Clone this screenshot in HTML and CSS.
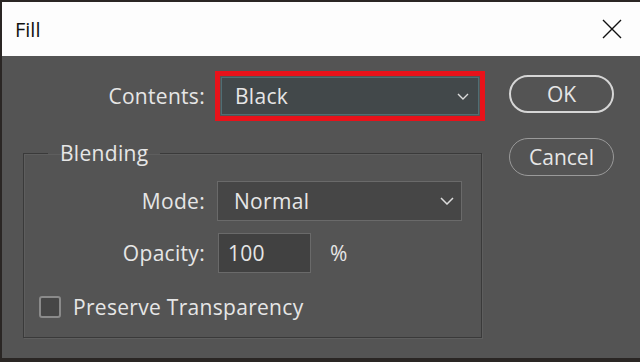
FILE: index.html
```html
<!DOCTYPE html>
<html lang="en">
<head>
    <meta charset="UTF-8">
    <meta name="viewport" content="width=device-width, initial-scale=1.0">
    <title>Fill</title>
    <link rel="stylesheet" href="styles.css">
</head>
<body>

<div class="window">
    <div class="title-bar">
        <span class="title">Fill</span>
        <svg class="close" width="20" height="20" viewBox="0 0 20 20">
            <path d="M1 1 L19 19 M19 1 L1 19" stroke="#111" stroke-width="1.4" fill="none"/>
        </svg>
    </div>

    <div class="dialog-body">
        <form class="form-col">
            <div class="row contents-row">
                <span class="label">Contents:</span>
                <div class="select highlight">
                    <span>Black</span>
                    <svg class="chevron" width="12" height="7" viewBox="0 0 12 7">
                        <path d="M1 1 L6 6 L11 1" stroke="#dcdcdc" stroke-width="1.4" fill="none"/>
                    </svg>
                </div>
            </div>

            <fieldset class="blending">
                <legend>Blending</legend>
                <div class="row mode-row">
                    <span class="label">Mode:</span>
                    <div class="select mode">
                        <span>Normal</span>
                        <svg class="chevron" width="14" height="8" viewBox="0 0 14 8">
                            <path d="M1 1 L7 7 L13 1" stroke="#dcdcdc" stroke-width="1.5" fill="none"/>
                        </svg>
                    </div>
                </div>
                <div class="row opacity-row">
                    <span class="label">Opacity:</span>
                    <div class="text-input">100</div>
                    <span class="unit">%</span>
                </div>
                <label class="check-row">
                    <span class="checkbox"></span>
                    <span>Preserve Transparency</span>
                </label>
            </fieldset>
        </form>

        <div class="buttons">
            <button class="btn ok" type="button">OK</button>
            <button class="btn cancel" type="button">Cancel</button>
        </div>
    </div>
</div>

</body>
</html>
```

FILE: styles.css
```css
html, body {
    margin: 0;
    padding: 0;
}

body {
    width: 640px;
    height: 362px;
    background-color: #2a2624;
    font-family: "Open Sans", "Noto Sans", sans-serif;
    overflow: hidden;
}

.window {
    margin: 2px 0 0 2px;
    height: 356px;
    background-color: #545454;
    color: #e6e6e6;
    font-size: 21px;
    letter-spacing: 0.3px;
}

.title-bar {
    height: 54px;
    background-color: #fdfdfd;
    display: flex;
    align-items: center;
    justify-content: space-between;
    padding: 0 18px 0 13px;
}

.title {
    color: #111;
    font-size: 20px;
    letter-spacing: 0;
}

.dialog-body {
    display: flex;
    align-items: flex-start;
    padding-left: 21px;
}

.form-col {
    width: 460px;
    margin: 0;
}

.row {
    display: flex;
    align-items: center;
}

.label {
    text-align: right;
    box-sizing: border-box;
}

.contents-row {
    margin-top: 21px;
}

.contents-row .label {
    width: 182px;
}

.select {
    display: flex;
    align-items: center;
    justify-content: space-between;
    box-sizing: border-box;
    padding: 0 9px 0 16px;
}

.select.highlight {
    margin-left: 16px;
    width: 258px;
    height: 38px;
    padding-left: 13px;
    background-color: #42484a;
    border: 1px solid #4f6e74;
    outline: 5px solid #e8121a;
    outline-offset: 1px;
}

.blending {
    margin: 26px 0 0 0;
    padding: 0;
    width: 459px;
    height: 197px;
    box-sizing: border-box;
    border: 1px solid #3a3a3a;
    box-shadow: inset 1px 1px 0 #5e5e5e, 1px 1px 0 #5e5e5e;
}

.blending legend {
    margin-left: 24px;
    padding: 0 12px;
    line-height: 24px;
}

.mode-row {
    margin-top: 16px;
}

.mode-row .label,
.opacity-row .label {
    width: 181px;
}

.select.mode {
    margin-left: 12px;
    width: 245px;
    height: 40px;
    background-color: #464646;
    border: 1px solid #6a6a6a;
    padding-right: 7px;
}

.opacity-row {
    margin-top: 12px;
}

.text-input {
    margin-left: 13px;
    width: 93px;
    height: 40px;
    box-sizing: border-box;
    padding-left: 9px;
    line-height: 38px;
    background-color: #414141;
    border: 1px solid #6a6a6a;
}

.unit {
    margin-left: 19px;
}

.check-row {
    display: flex;
    align-items: center;
    margin: 20px 0 0 15px;
}

.checkbox {
    width: 22px;
    height: 22px;
    box-sizing: border-box;
    border: 2px solid #8a8a8a;
    border-radius: 3px;
    background-color: #464646;
    margin-right: 12px;
}

.buttons {
    display: flex;
    flex-direction: column;
    margin: 19px 0 0 26px;
}

.btn {
    width: 105px;
    height: 38px;
    border-radius: 19px;
    background: transparent;
    color: #e6e6e6;
    font-family: inherit;
    font-size: 21px;
    padding: 0;
}

.btn.ok {
    border: 2px solid #d6d6d6;
}

.btn.cancel {
    margin-top: 25px;
    border: 1px solid #9a9a9a;
}
```
